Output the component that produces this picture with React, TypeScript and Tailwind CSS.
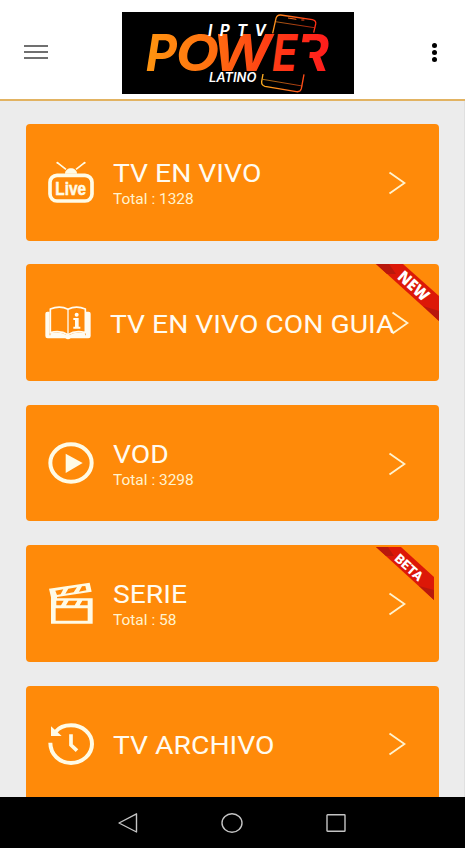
import React from 'react';

const LiveIcon = () => (
  <svg width="46" height="42" viewBox="0 0 138 126" fill="none" aria-hidden="true">
    <path d="M28 5 L54 25 M110 5 L84 25" stroke="#fffbe6" strokeWidth="5" />
    <circle cx="28" cy="5" r="3" fill="#fffbe6" />
    <circle cx="110" cy="5" r="3" fill="#fffbe6" />
    <path d="M51 38 C51 16 87 16 87 38 Z" fill="#fffbe6" />
    <rect x="6" y="43" width="126" height="77" rx="21" stroke="#fffbe6" strokeWidth="11" />
    <text
      x="22"
      y="103"
      textLength="92"
      lengthAdjust="spacingAndGlyphs"
      fill="#fffbe6"
      stroke="#fffbe6"
      strokeWidth="1.5"
      fontFamily="'Liberation Sans', sans-serif"
      fontWeight="700"
      fontSize="54"
    >
      Live
    </text>
  </svg>
);

const GuideIcon = () => (
  <svg width="46" height="34" viewBox="0 0 138 102" fill="none" aria-hidden="true">
    <path d="M14 17 H7 Q1 17 1 23 V90 Q1 97 8 97 H61 Q69 103 77 97 H130 Q137 97 137 90 V23 Q137 17 131 17 H123 V88 H14 Z" fill="#fffbf0" />
    <path d="M16 9 Q45 -3 69 10 Q93 -3 121 9 V80 Q91 72 69 86 Q46 72 16 80 Z" fill="#ff8a09" stroke="#fffbf0" strokeWidth="5" strokeLinejoin="round" />
    <path d="M16 82 Q46 75 69 89 Q91 75 121 82 V94 H16 Z" fill="#fffbf0" />
    <path d="M69 10 V90" stroke="#fffbf0" strokeWidth="4" />
    <circle cx="95" cy="26" r="6" fill="#fffbf0" />
    <path d="M85 36 H101 V62 H106 V68 H85 V62 H90 V42 H85 Z" fill="#fffbf0" />
  </svg>
);

const PlayIcon = () => (
  <svg width="46" height="42" viewBox="0 0 138 126" fill="none" aria-hidden="true">
    <ellipse cx="69" cy="63" rx="62" ry="56" stroke="#fffbe6" strokeWidth="12" />
    <path d="M53 35 L104 63 L53 93 Z" fill="#fffbe6" />
  </svg>
);

const ClapperIcon = () => (
  <svg width="46" height="42" viewBox="0 0 138 126" fill="none" aria-hidden="true">
    <path
      fillRule="evenodd"
      d="M3 20 L125 2 L131 29 L27 45 V49 H134 V125 H9 V46 Z M22 26 L27 39 L38 37 L46 22 Z M61 20 L52 35 L77 31 L87 16 Z M102 13 L93 29 L115 25 L112 12 Z M25 56 V70 H39 L47 56 Z M62 56 L54 70 H80 L88 56 Z M103 56 L95 70 H119 V56 Z M23 79 V116 H119 V79 Z"
      fill="#fffbe6"
    />
  </svg>
);

const ArchiveIcon = () => (
  <svg width="46" height="42" viewBox="0 0 138 126" fill="none" aria-hidden="true">
    <path d="M7 59 C7 94 35 120 69 120 C104 120 132 94 132 63 C132 31 104 7 69 7 C48 7 32 15 22 27" stroke="#fffbe6" strokeWidth="12" />
    <path d="M9 10 L9 39 L41 39 Z" fill="#fffbe6" />
    <path d="M69 34 V66 L87 83" stroke="#fffbe6" strokeWidth="11" />
  </svg>
);

const Chevron = () => (
  <svg width="18" height="24" viewBox="0 0 18 24" fill="none" aria-hidden="true">
    <path d="M1.5 1.5 L16.5 12 L1.5 22.5" stroke="#fff3cf" strokeWidth="1.9" />
  </svg>
);

const NewRibbon = () => (
  <svg className="absolute right-0 top-0" width="63" height="57" viewBox="0 0 63 57" aria-hidden="true">
    <path d="M0 0 H27 L63 32 V57 Z" fill="#dc1808" />
    <path d="M0 0 H13 L20 10 L11 10 Z M47 42 L63 47 V57 Z" fill="#b8180c" />
    <text x="37.5" y="27.5" textAnchor="middle" textLength="36" lengthAdjust="spacingAndGlyphs" transform="rotate(42 37.5 22)" fill="#fff" fontFamily="'Open Sans', sans-serif" fontWeight="800" fontSize="16">
      NEW
    </text>
  </svg>
);

const BetaRibbon = () => (
  <svg className="absolute right-[5px] top-[2px]" width="58" height="53" viewBox="0 0 58 53" aria-hidden="true">
    <path d="M0 0 H25 L58 30 V53 Z" fill="#dc1808" />
    <path d="M0 0 H12 L18 9 L10 9 Z M43 39 L58 43 V53 Z" fill="#b8180c" />
    <text x="33" y="25" textAnchor="middle" textLength="33" lengthAdjust="spacingAndGlyphs" transform="rotate(42 33 20.5)" fill="#fff" fontFamily="Roboto, sans-serif" fontWeight="900" fontSize="13">
      BETA
    </text>
  </svg>
);

const Logo = () => (
  <svg width="232" height="82" viewBox="37 34 696 246" role="img" aria-label="IPTV Power Latino">
    <defs>
      <linearGradient id="phone" gradientUnits="userSpaceOnUse" x1="455" y1="0" x2="620" y2="0">
        <stop offset="0" stopColor="#ffb020" />
        <stop offset="1" stopColor="#ff2c14" />
      </linearGradient>
      <linearGradient id="power" gradientUnits="userSpaceOnUse" x1="113" y1="0" x2="658" y2="0">
        <stop offset="0" stopColor="#ff9410" />
        <stop offset="0.35" stopColor="#ff7010" />
        <stop offset="0.65" stopColor="#ff4014" />
        <stop offset="1" stopColor="#ff1c1c" />
      </linearGradient>
    </defs>
    <rect x="37" y="34" width="696" height="246" fill="#000" />
    <g fill="none" stroke="url(#phone)" strokeWidth="4">
      <path d="M489 98 L499 53 Q502 42 513 43 L608 57 Q620 60 618 70 L612 96" />
      <path d="M497 63 L614 81" strokeWidth="2" />
      <path d="M535 52 L560 56 M575 58 H584" strokeWidth="3" />
      <path d="M460 220 L456 243 Q455 254 466 257 L560 273 Q572 275 575 264 L583 221" />
      <path d="M459 236 L578 256" strokeWidth="2" />
    </g>
    <g fill="url(#power)" fontFamily="Inter, sans-serif" fontStyle="italic" fontWeight="700" fontSize="151">
      <text x="560" y="211" textLength="98" lengthAdjust="spacingAndGlyphs">R</text>
      {/* the R stands without its stem */}
      <path d="M560 125 H603 L595 216 H540 Z" fill="#000" />
      <text x="108" y="211" textLength="94" lengthAdjust="spacingAndGlyphs">P</text>
      <text x="198" y="211" textLength="130" lengthAdjust="spacingAndGlyphs">O</text>
      <text x="308" y="211" textLength="178" lengthAdjust="spacingAndGlyphs">W</text>
      <text x="487" y="211" textLength="76" lengthAdjust="spacingAndGlyphs">E</text>
    </g>
    <g fill="#fff" fontFamily="Inter, sans-serif" fontStyle="italic">
      <text x="295" y="107" fontSize="46" fontWeight="700" textLength="174">IPTV</text>
      <text x="298" y="244" fontSize="38" fontWeight="600" textLength="142" lengthAdjust="spacingAndGlyphs">LATINO</text>
    </g>
  </svg>
);

interface MenuItem {
  title: string;
  total?: number;
  icon: React.ReactNode;
  ribbon?: React.ReactNode;
  wide?: boolean;
}

const items: MenuItem[] = [
  { title: 'TV EN VIVO', total: 1328, icon: <LiveIcon /> },
  { title: 'TV EN VIVO CON GUIA', icon: <GuideIcon />, ribbon: <NewRibbon />, wide: true },
  { title: 'VOD', total: 3298, icon: <PlayIcon /> },
  { title: 'SERIE', total: 58, icon: <ClapperIcon />, ribbon: <BetaRibbon /> },
  { title: 'TV ARCHIVO', icon: <ArchiveIcon /> },
];

const MenuCard: React.FC<{ item: MenuItem }> = ({ item }) => (
  <button
    className={`relative flex h-[116.7px] w-full shrink-0 items-center overflow-hidden rounded-[4px] bg-[#ff8a09] text-left text-[#fffbf0] ${
      item.wide ? 'pl-[19px] pr-[30px]' : 'pl-[21.5px] pr-[33px]'
    }`}
  >
    <span className="shrink-0">{item.icon}</span>
    <span
      className={`ml-[19px] flex min-w-0 flex-1 origin-left scale-x-[1.067] flex-col whitespace-nowrap ${
        item.total !== undefined ? 'pt-[6px]' : 'pt-[3px]'
      }`}
    >
      <span className="text-[26.5px] leading-[30px]">{item.title}</span>
      {item.total !== undefined && (
        <span className="text-[14.5px] leading-[24px] text-[#fff3cf]">Total : {item.total}</span>
      )}
    </span>
    <span className="shrink-0 pt-px">
      <Chevron />
    </span>
    {item.ribbon}
  </button>
);

export default function App() {
  return (
    <div className="flex h-screen w-full flex-col overflow-hidden bg-[#ececec] font-['Roboto',sans-serif]">
      <header className="flex h-[101px] shrink-0 items-center border-b-2 border-[#e2b362] bg-white pl-6 pr-[28px] pt-[6px]">
        <button className="mb-px flex w-6 flex-col gap-[4.4px]" aria-label="Menu">
          <span className="h-[2px] bg-[#707070]" />
          <span className="h-[2px] bg-[#707070]" />
          <span className="h-[2px] bg-[#707070]" />
        </button>
        <span className="ml-[74px]">
          <Logo />
        </span>
        <button className="ml-auto flex flex-col gap-[2px]" aria-label="Opciones">
          <span className="size-[5px] rounded-full bg-black" />
          <span className="size-[5px] rounded-full bg-black" />
          <span className="size-[5px] rounded-full bg-black" />
        </button>
      </header>

      <main className="flex min-h-0 flex-1 flex-col gap-[23.7px] overflow-hidden border-r border-[#e0e0e0] pl-[26px] pr-[25px] pt-[23px]">
        {items.map((item) => (
          <MenuCard key={item.title} item={item} />
        ))}
      </main>

      <nav className="flex h-[51px] shrink-0 items-center justify-center gap-[83px] bg-black pr-px">
        <svg width="20" height="20" viewBox="0 0 20 20" fill="none" stroke="#c4c4c4" strokeWidth="1.4" strokeLinejoin="round">
          <path d="M18.5 0.8 V19 L1 10 Z" />
        </svg>
        <svg width="22" height="20" viewBox="0 0 22 20" fill="none" stroke="#c4c4c4" strokeWidth="1.4">
          <ellipse cx="11" cy="10" rx="10" ry="9.2" />
        </svg>
        <svg width="20" height="20" viewBox="0 0 20 20" fill="none" stroke="#c4c4c4" strokeWidth="1.4">
          <rect x="1" y="1.7" width="18" height="16.6" rx="0.6" />
        </svg>
      </nav>
    </div>
  );
}
